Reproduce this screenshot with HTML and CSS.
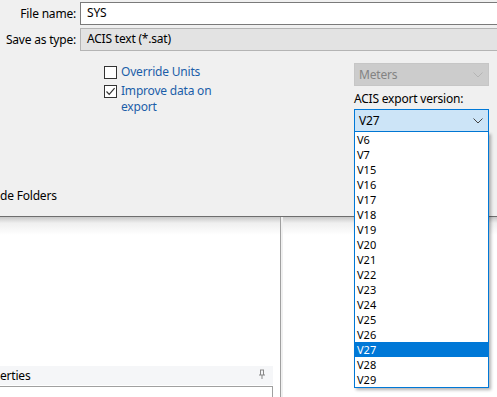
FILE: index.html
```html
<!DOCTYPE html>
<html>
<head>
<meta charset="utf-8">
<link rel="stylesheet" href="styles.css">
</head>
<body>
<div class="dialog">
  <div class="field-row first">
    <span class="label">File name:</span>
    <div class="input">SYS</div>
  </div>
  <div class="field-row">
    <span class="label">Save as type:</span>
    <div class="input type">ACIS text (*.sat)</div>
  </div>
  <div class="options">
    <div class="checks">
      <label class="check"><span class="box"></span><span class="ctext">Override Units</span></label>
      <label class="check"><span class="box"><svg width="11" height="11" viewBox="0 0 11 11"><path d="M1.5 5.5 L4.2 8.3 L9.6 2.2" fill="none" stroke="#333" stroke-width="1.2"/></svg></span><span class="ctext">Improve data on<br>export</span></label>
    </div>
    <div class="rightcol">
      <div class="combo disabled"><span>Meters</span><svg width="10" height="6" viewBox="0 0 10 6"><path d="M0.5 0.5 L5 5 L9.5 0.5" fill="none" stroke="#b5b5b5" stroke-width="1"/></svg></div>
      <div class="ver-label">ACIS export version:</div>
      <div class="combo open"><span>V27</span><svg width="10" height="6" viewBox="0 0 10 6"><path d="M0.5 0.5 L5 5 L9.5 0.5" fill="none" stroke="#444" stroke-width="1"/></svg></div>
    </div>
  </div>
  <div class="folders">de Folders</div>
</div>
<div class="lower">
  <div class="leftpane">
    <div class="panel-head"><span>erties</span><svg class="pin" width="8" height="11" viewBox="0 0 8 11"><path d="M2 1 H6 M2.5 1 V6 M5.5 1 V6 M1 6 H7 M4 6 V10" fill="none" stroke="#888" stroke-width="1"/></svg></div>
    <div class="panel-box"></div>
  </div>
  <div class="rightpane"></div>
</div>
<ul class="droplist">
  <li>V6</li><li>V7</li><li>V15</li><li>V16</li><li>V17</li><li>V18</li><li>V19</li><li>V20</li><li>V21</li><li>V22</li><li>V23</li><li>V24</li><li>V25</li><li>V26</li><li class="sel">V27</li><li>V28</li><li>V29</li>
</ul>
</body>
</html>
```
FILE: styles.css
```css
html, body {
  margin: 0;
  padding: 0;
  width: 497px;
  height: 397px;
  overflow: hidden;
  background: #fff;
  font-family: "Noto Sans", "Open Sans", sans-serif;
  font-size: 12px;
  letter-spacing: -0.2px;
  color: #000;
}
.dialog {
  height: 217px;
  background: #f0f0f0;
  border-bottom: 1px solid #6e6e6e;
  box-sizing: border-box;
  position: relative;
}
.field-row {
  display: flex;
  align-items: center;
  height: 23px;
  margin-top: 3px;
}
.field-row.first {
  padding-top: 2px;
  margin-top: 0;
}
.label {
  width: 76px;
  text-align: right;
  padding-right: 4px;
  white-space: nowrap;
  flex: none;
}
.input {
  flex: 1;
  height: 23px;
  box-sizing: border-box;
  border: 1px solid #7a7a7a;
  border-right: none;
  background: #fff;
  padding-left: 6px;
  line-height: 20px;
}
.input.type {
  background: #e3e3e3;
  border-color: #b4b4b4;
}
.options {
  display: flex;
  margin-top: 12px;
}
.checks {
  margin-left: 104px;
  width: 250px;
  padding-top: 1px;
}
.check {
  display: flex;
  align-items: flex-start;
  color: #1b5ea8;
  line-height: 16px;
  margin-bottom: 3px;
}
.box {
  width: 11px;
  height: 11px;
  border: 1px solid #333;
  background: #fff;
  margin-right: 4px;
  margin-top: 2px;
  flex: none;
  display: flex;
}
.rightcol {
  width: 135px;
}
.combo {
  height: 23px;
  box-sizing: border-box;
  display: flex;
  align-items: center;
  justify-content: space-between;
  padding: 0 5px 0 4px;
}
.combo.disabled {
  background: #cccccc;
  border: 1px solid #c6c6c6;
  color: #838383;
}
.ver-label {
  margin-top: 3px;
  line-height: 20px;
}
.combo.open {
  background: #cce4f7;
  border: 1px solid #0078d7;
  color: #000;
}
.folders {
  position: absolute;
  left: 0;
  top: 187px;
  line-height: 18px;
}
.lower {
  display: flex;
  height: 180px;
}
.leftpane {
  width: 280px;
  border-right: 1px solid #a0a0a0;
  background: linear-gradient(#c8c8c8 0, #efefef 6px, #fff 18px);
  display: flex;
  flex-direction: column;
  justify-content: flex-end;
}
.rightpane {
  flex: 1;
  background: linear-gradient(#c8c8c8 0, #efefef 6px, #fff 18px);
  border-left: 2px solid #f0f0f0;
}
.panel-head {
  height: 19px;
  width: 273px;
  background: #f5f6f8;
  display: flex;
  align-items: center;
  justify-content: space-between;
  box-sizing: border-box;
  padding-right: 7px;
  margin-bottom: 1px;
}
.pin { margin-top: -2px; }
.panel-box {
  height: 11px;
  width: 273px;
  box-sizing: border-box;
  border-top: 1px solid #a0a0a0;
  border-right: 1px solid #a0a0a0;
}
.droplist {
  position: absolute;
  left: 354px;
  top: 132px;
  width: 135px;
  margin: 0;
  padding: 0;
  list-style: none;
  background: #fff;
  border: 1px solid #0078d7;
  border-top: none;
  box-sizing: border-box;
  box-shadow: 2px 2px 3px rgba(0,0,0,0.3);
  font-size: 11px;
  letter-spacing: 0;
}
.droplist li {
  height: 15px;
  line-height: 15px;
  padding-left: 2px;
}
.droplist li.sel {
  background: #0078d7;
  color: #fff;
}
```
